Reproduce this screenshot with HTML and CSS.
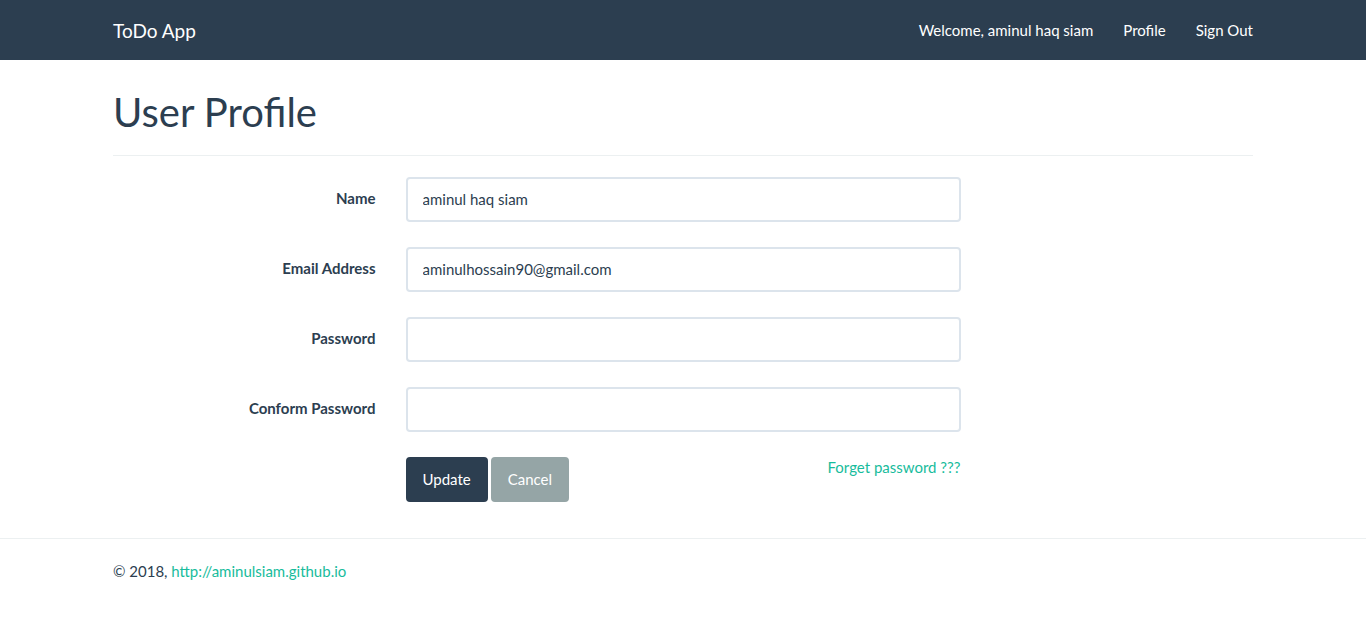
FILE: index.html
```html
<!DOCTYPE html>
<html>
<head>
<meta charset="utf-8">
<link rel="stylesheet" href="styles.css">
<title>ToDo App</title>
</head>
<body>
<nav class="navbar">
  <div class="container nav-inner">
    <a class="brand" href="#">ToDo App</a>
    <ul class="nav-links">
      <li><a href="#">Welcome, aminul haq siam</a></li>
      <li><a href="#">Profile</a></li>
      <li><a href="#">Sign Out</a></li>
    </ul>
  </div>
</nav>
<main class="container">
  <div class="page-header"><h1>User Profile</h1></div>
  <form class="form">
    <div class="form-group">
      <label class="label">Name</label>
      <div class="field"><input class="input" type="text" value="aminul haq siam"></div>
    </div>
    <div class="form-group">
      <label class="label">Email Address</label>
      <div class="field"><input class="input" type="email" value="aminulhossain90@gmail.com"></div>
    </div>
    <div class="form-group">
      <label class="label">Password</label>
      <div class="field"><input class="input" type="password"></div>
    </div>
    <div class="form-group">
      <label class="label">Conform Password</label>
      <div class="field"><input class="input" type="password"></div>
    </div>
    <div class="form-group actions-row">
      <div class="label"></div>
      <div class="field actions">
        <div class="buttons">
          <button type="button" class="btn btn-primary">Update</button>
          <button type="button" class="btn btn-default">Cancel</button>
        </div>
        <a class="forgot" href="#">Forget password ???</a>
      </div>
    </div>
  </form>
</main>
<footer class="footer">
  <div class="container">© 2018, <a href="#">http://aminulsiam.github.io</a></div>
</footer>
</body>
</html>
```
FILE: styles.css
```css
* { box-sizing: border-box; }
html, body { margin: 0; padding: 0; }
body {
  font-family: Lato, "Open Sans", sans-serif;
  font-size: 15px;
  line-height: 1.428571;
  color: #2c3e50;
  background: #fff;
}
a { color: #18bc9c; text-decoration: none; }
.container {
  width: 1170px;
  margin: 0 auto;
  padding: 0 15px;
}
.navbar {
  background: #2c3e50;
  height: 60px;
}
.nav-inner {
  display: flex;
  justify-content: space-between;
  align-items: center;
  height: 60px;
}
.brand {
  color: #fff;
  font-size: 19px;
  line-height: 21px;
}
.nav-links {
  list-style: none;
  margin: 0 -15px 0 0;
  padding: 0;
  display: flex;
}
.nav-links a {
  display: block;
  color: #fff;
  padding: 20px 15px 19px;
  line-height: 21px;
}
.page-header {
  margin-top: 30px;
  padding-bottom: 21px;
  border-bottom: 1px solid #ecf0f1;
  margin-bottom: 21px;
}
.page-header h1 {
  margin: 0;
  font-size: 40px;
  font-weight: 400;
  line-height: 1.1;
}
.form-group {
  display: flex;
  margin: 0 -15px 25px;
}
.label {
  width: 292.5px;
  padding: 11px 15px 0;
  text-align: right;
  font-weight: 700;
  line-height: 21px;
}
.field {
  width: 585px;
  padding: 0 15px;
}
.input {
  display: block;
  width: 100%;
  height: 45px;
  padding: 9px 15px 11px;
  font-family: inherit;
  font-size: 15px;
  color: #2c3e50;
  border: 2px solid #dce4ec;
  border-radius: 4px;
  background: #fff;
  outline: none;
}
.actions-row { margin-bottom: 0; }
.actions {
  display: flex;
  justify-content: space-between;
  align-items: flex-start;
}
.buttons { display: flex; gap: 3px; }
.btn {
  font-family: inherit;
  font-size: 15px;
  line-height: 21px;
  padding: 10px 15px;
  border: 2px solid transparent;
  border-radius: 4px;
  color: #fff;
  cursor: pointer;
}
.btn-primary { background: #2c3e50; border-color: #2c3e50; }
.btn-default { background: #95a5a6; border-color: #95a5a6; }
.forgot {
  line-height: 21px;
  margin-top: 0;
}
.footer {
  margin-top: 36px;
  border-top: 1px solid #ecf0f1;
  padding-top: 22px;
}
```
